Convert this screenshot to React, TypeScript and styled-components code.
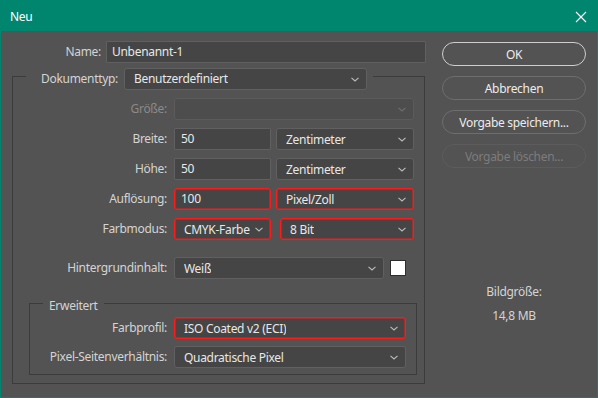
import React from "react";
import styled, { createGlobalStyle } from "styled-components";

const GlobalStyle = createGlobalStyle`
  html, body {
    margin: 0;
    padding: 0;
    background: #535353;
  }
  * {
    box-sizing: border-box;
  }
`;

const Window = styled.div`
  width: 598px;
  height: 398px;
  border: 1px solid #00866f;
  background: #535353;
  display: flex;
  flex-direction: column;
  font-family: "Noto Sans", "DejaVu Sans", sans-serif;
  font-size: 12px;
  letter-spacing: -0.3px;
  color: #d4d4d4;
  overflow: hidden;
`;

const TitleBar = styled.div`
  height: 30px;
  flex: none;
  background: #00866f;
  display: flex;
  align-items: center;
  justify-content: space-between;
  padding: 1px 9px 0 9px;
  color: #ffffff;
  font-size: 12px;
`;

const CloseButton = styled.div`
  width: 14px;
  height: 14px;
  display: flex;
  align-items: center;
  justify-content: center;
`;

const Body = styled.div`
  flex: 1;
  display: flex;
  padding: 10px 11px 0 11px;
`;

const LeftPane = styled.div`
  width: 414px;
  display: flex;
  flex-direction: column;
`;

const RightPane = styled.div`
  width: 145px;
  margin-left: 16px;
  padding-top: 1px;
  display: flex;
  flex-direction: column;
  gap: 10px;
`;

const NameRow = styled.div`
  display: flex;
  align-items: center;
  gap: 5px;
`;

const Label = styled.label<{ $width?: number; $disabled?: boolean }>`
  flex: none;
  width: ${(p) => (p.$width ? `${p.$width}px` : "auto")};
  text-align: right;
  line-height: 22px;
  white-space: nowrap;
  color: ${(p) => (p.$disabled ? "#8a8a8a" : "#d4d4d4")};
`;

const TextInput = styled.div<{ $width?: number; $alert?: boolean; $pad?: number }>`
  flex: ${(p) => (p.$width ? "none" : "1")};
  width: ${(p) => (p.$width ? `${p.$width}px` : "auto")};
  height: 22px;
  line-height: 20px;
  padding-left: ${(p) => p.$pad ?? 5}px;
  background: #454545;
  border: 1px solid ${(p) => (p.$alert ? "#ff1a1a" : "#606060")};
  border-radius: ${(p) => (p.$alert ? "3px" : "1px")};
  box-shadow: ${(p) => (p.$alert ? "inset 0 0 0 0.5px #ff1a1a" : "none")};
  color: #e8e8e8;
  white-space: nowrap;
`;

const Dropdown = styled.div<{ $width?: number; $alert?: boolean; $disabled?: boolean }>`
  flex: ${(p) => (p.$width ? "none" : "1")};
  width: ${(p) => (p.$width ? `${p.$width}px` : "auto")};
  min-width: 0;
  height: 22px;
  display: flex;
  align-items: center;
  justify-content: space-between;
  gap: 4px;
  padding: 0 7px 0 9px;
  background: ${(p) => (p.$disabled ? "#4d4d4d" : "#454545")};
  border: 1px solid
    ${(p) => (p.$alert ? "#ff1a1a" : p.$disabled ? "#5b5b5b" : "#606060")};
  border-radius: 3px;
  box-shadow: ${(p) => (p.$alert ? "inset 0 0 0 0.5px #ff1a1a" : "none")};
  color: #e8e8e8;
  white-space: nowrap;
`;

const DropdownValue = styled.span`
  min-width: 0;
  overflow: hidden;
`;

const Chevron = ({ dim }: { dim?: boolean }) => (
  <svg width="8" height="5" viewBox="0 0 8 5" style={{ flex: "none" }}>
    <polyline
      points="0.5,0.8 4,4 7.5,0.8"
      fill="none"
      stroke={dim ? "#6e6e6e" : "#bcbcbc"}
      strokeWidth="1.1"
    />
  </svg>
);

const Select = ({
  value,
  width,
  alert,
  disabled,
}: {
  value?: string;
  width?: number;
  alert?: boolean;
  disabled?: boolean;
}) => (
  <Dropdown $width={width} $alert={alert} $disabled={disabled}>
    <DropdownValue>{value}</DropdownValue>
    <Chevron dim={disabled} />
  </Dropdown>
);

const Group = styled.fieldset<{ $margin: string; $pad: string }>`
  margin: ${(p) => p.$margin};
  padding: ${(p) => p.$pad};
  border: 1px solid #3c3c3c;
  min-width: 0;
  display: flex;
  flex-direction: column;
`;

const Legend = styled.legend<{ $offset: number }>`
  height: 16px;
  margin-left: ${(p) => p.$offset}px;
  padding: 0 6px;
  display: flex;
  align-items: flex-start;
  gap: 6px;
  line-height: 16px;
`;

const LegendLabel = styled.span<{ $pad?: number }>`
  padding-left: ${(p) => p.$pad ?? 0}px;
  line-height: 22px;
  white-space: nowrap;
`;

const Rows = styled.div<{ $gap: number; $right: number }>`
  display: flex;
  flex-direction: column;
  gap: ${(p) => p.$gap}px;
  padding-right: ${(p) => p.$right}px;
`;

const Row = styled.div<{ $gap?: number; $top?: number }>`
  display: flex;
  align-items: center;
  gap: ${(p) => p.$gap ?? 7}px;
  margin-top: ${(p) => p.$top ?? 0}px;
`;

const Fields = styled.div<{ $gap?: number }>`
  flex: 1;
  min-width: 0;
  display: flex;
  align-items: center;
  gap: ${(p) => p.$gap ?? 5}px;
`;

const Swatch = styled.div`
  width: 16px;
  height: 16px;
  flex: none;
  background: #ffffff;
  border: 1px solid #2e2e2e;
  margin-right: 8px;
`;

const Button = styled.div<{ $primary?: boolean; $disabled?: boolean }>`
  height: 24px;
  border-radius: 12px;
  display: flex;
  align-items: center;
  justify-content: center;
  border: ${(p) =>
    p.$primary
      ? "1.5px solid #cfcfcf"
      : p.$disabled
      ? "1px solid #5c5c5c"
      : "1px solid #6e6e6e"};
  color: ${(p) => (p.$disabled ? "#7c7c7c" : "#ececec")};
  white-space: nowrap;
`;

const Info = styled.div`
  margin-top: 106px;
  display: flex;
  flex-direction: column;
  align-items: center;
  gap: 8px;
  line-height: 16px;
  color: #d4d4d4;
`;

export default function App() {
  return (
    <>
      <GlobalStyle />
      <Window>
        <TitleBar>
          <span>Neu</span>
          <CloseButton>
            <svg width="12" height="12" viewBox="0 0 12 12">
              <path d="M1 1 L11 11 M11 1 L1 11" stroke="#ffffff" strokeWidth="1.1" />
            </svg>
          </CloseButton>
        </TitleBar>
        <Body>
          <LeftPane>
            <NameRow>
              <Label $width={89}>Name:</Label>
              <TextInput>Unbenannt-1</TextInput>
            </NameRow>
            <Group $margin="5px 1px 0 0" $pad="14px 0 0 0">
              <Legend $offset={13}>
                <LegendLabel $pad={9}>Dokumenttyp:</LegendLabel>
                <Select value="Benutzerdefiniert" width={243} />
              </Legend>
              <Rows $gap={8} $right={10}>
                <Row>
                  <Label $width={154} $disabled>
                    Größe:
                  </Label>
                  <Select disabled />
                </Row>
                <Row>
                  <Label $width={154}>Breite:</Label>
                  <Fields>
                    <TextInput $width={97} $pad={6}>50</TextInput>
                    <Select value="Zentimeter" />
                  </Fields>
                </Row>
                <Row>
                  <Label $width={154}>Höhe:</Label>
                  <Fields>
                    <TextInput $width={97} $pad={6}>50</TextInput>
                    <Select value="Zentimeter" />
                  </Fields>
                </Row>
                <Row>
                  <Label $width={154}>Auflösung:</Label>
                  <Fields>
                    <TextInput $width={97} $pad={6} $alert>
                      100
                    </TextInput>
                    <Select value="Pixel/Zoll" alert />
                  </Fields>
                </Row>
                <Row>
                  <Label $width={154}>Farbmodus:</Label>
                  <Fields $gap={9}>
                    <Select value="CMYK-Farbe" width={97} alert />
                    <Select value="8 Bit" alert />
                  </Fields>
                </Row>
                <Row $top={9}>
                  <Label $width={154}>Hintergrundinhalt:</Label>
                  <Fields $gap={6}>
                    <Select value="Weiß" width={210} />
                    <Swatch />
                  </Fields>
                </Row>
              </Rows>
              <Group $margin="16px 7px 8px 16px" $pad="6px 0 6px 0">
                <Legend $offset={13}>
                  <LegendLabel>Erweitert</LegendLabel>
                </Legend>
                <Rows $gap={7} $right={10}>
                  <Row>
                    <Label $width={137}>Farbprofil:</Label>
                    <Select value="ISO Coated v2 (ECI)" alert />
                  </Row>
                  <Row>
                    <Label $width={137}>Pixel-Seitenverhältnis:</Label>
                    <Select value="Quadratische Pixel" />
                  </Row>
                </Rows>
              </Group>
            </Group>
          </LeftPane>
          <RightPane>
            <Button $primary>OK</Button>
            <Button>Abbrechen</Button>
            <Button>Vorgabe speichern...</Button>
            <Button $disabled>Vorgabe löschen...</Button>
            <Info>
              <span>Bildgröße:</span>
              <span>14,8 MB</span>
            </Info>
          </RightPane>
        </Body>
      </Window>
    </>
  );
}
